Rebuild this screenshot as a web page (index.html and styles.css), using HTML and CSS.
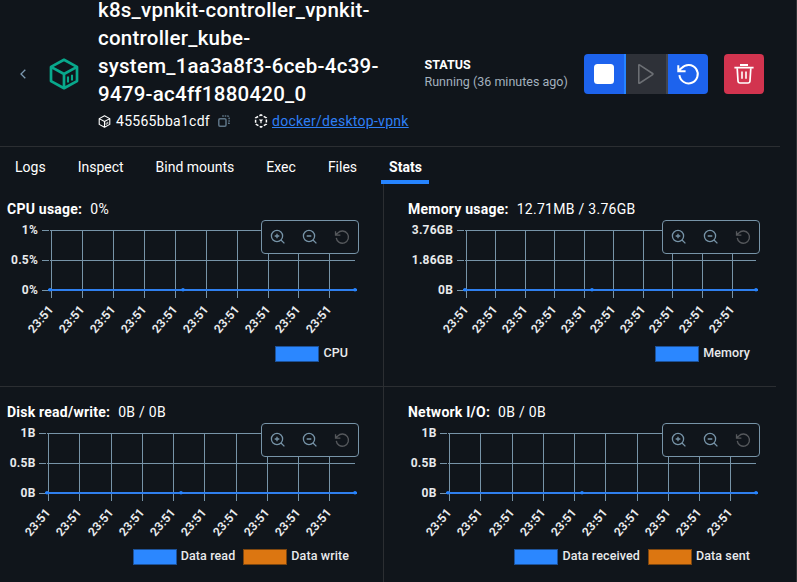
FILE: index.html
```html
<!DOCTYPE html>
<html lang="en">
<head>
<meta charset="utf-8">
<title>Container stats</title>
<link rel="stylesheet" href="styles.css">
</head>
<body>
<svg class="defs" aria-hidden="true">
  <symbol id="cube" viewBox="0 0 30 32">
    <path d="M15 1.8 28 8.9V23.1L15 30.2 2 23.1V8.9Z M2 8.9 15 16 28 8.9 M15 16V30" fill="none" stroke="currentColor" stroke-width="2.7" stroke-linejoin="round"/>
    <path d="M19 18.6V24.4 M23 16.8V22.6" fill="none" stroke="currentColor" stroke-width="2.1"/>
  </symbol>
  <symbol id="zoom-in" viewBox="0 0 16 16">
    <g fill="none" stroke="currentColor" stroke-width="1.3"><circle cx="7" cy="7" r="5.6"/><path d="M11 11 14.4 14.4 M7 4.7V9.3 M4.7 7H9.3"/></g>
  </symbol>
  <symbol id="zoom-out" viewBox="0 0 16 16">
    <g fill="none" stroke="currentColor" stroke-width="1.3"><circle cx="7" cy="7" r="5.6"/><path d="M11 11 14.4 14.4 M4.7 7H9.3"/></g>
  </symbol>
  <symbol id="restart" viewBox="0 0 24 24">
    <path d="M3.4 13.2A9.2 9.2 0 1 0 5.6 6.1L2.8 8.6 M2.3 3.2V9.2H9.6" fill="none" stroke="currentColor" stroke-width="2"/>
  </symbol>
</svg>

<div class="page">
  <header class="header">
    <svg class="back" viewBox="0 0 6 10"><path d="M5.3.7 1 5 5.3 9.3" fill="none" stroke="currentColor" stroke-width="1.3"/></svg>
    <svg class="logo"><use href="#cube"/></svg>
    <div class="identity">
      <h1>k8s_vpnkit-controller_vpnkit-<br>controller_kube-<br>system_1aa3a8f3-6ceb-4c39-<br>9479-ac4ff1880420_0</h1>
      <div class="meta">
        <svg class="meta-icon"><use href="#cube"/></svg>
        <span class="hash">45565bba1cdf</span>
        <svg class="copy" viewBox="0 0 12 12"><g fill="none" stroke="currentColor" stroke-width="1.5"><rect x=".8" y="3.8" width="7.2" height="7.4" rx="1.2"/><path d="M4.2 1H9.2Q11.1 1 11.1 3V8.2H9.4" stroke-dasharray="1.6 .9"/></g></svg>
        <svg class="image-icon" viewBox="0 0 14 14"><path d="M7 .9 12.4 3.9V10.1L7 13.1 1.6 10.1V3.9Z" fill="none" stroke="currentColor" stroke-width="1.5" stroke-dasharray="3.1 1.5" stroke-dashoffset="1.5"/><path d="M4.8 5.6H9.2L7.6 7.2V9.2H6.4V7.2Z" fill="currentColor"/></svg>
        <a class="image-link" href="#">docker/desktop-vpnk</a>
      </div>
    </div>
    <div class="status">
      <div class="status-title">STATUS</div>
      <div class="status-text">Running (36 minutes ago)</div>
    </div>
    <div class="actions">
      <button class="btn stop" aria-label="Stop"><svg viewBox="0 0 20 20"><rect width="20" height="20" rx="3.5" fill="currentColor"/></svg></button>
      <button class="btn start" aria-label="Start"><svg viewBox="0 0 20 20"><path d="M2.8 1.2V18.8Q2.8 19.6 3.5 19.2L16.6 10.6Q17.3 10 16.6 9.5L3.5.9Q2.8.5 2.8 1.2Z" fill="none" stroke="currentColor" stroke-width="1.6"/></svg></button>
      <button class="btn again" aria-label="Restart"><svg><use href="#restart"/></svg></button>
    </div>
    <button class="btn delete" aria-label="Delete"><svg viewBox="0 0 20 20"><g fill="none" stroke="currentColor"><path d="M6 1H14 M.4 3.7H19.6" stroke-width="1.8"/><path d="M3.2 4.2 4 17Q4.2 19 6 19H14Q15.8 19 16 17L16.8 4.2" stroke-width="1.7"/><path d="M8 7.4V14.8 M12 7.4V14.8" stroke-width="1.6"/></g></svg></button>
  </header>

  <nav class="tabs">
    <a>Logs</a><a>Inspect</a><a>Bind mounts</a><a>Exec</a><a>Files</a><a class="active">Stats</a>
  </nav>

  <main class="grid" id="grid"></main>
</div>
<script src="charts.js"></script>
</body>
</html>
```
FILE: charts.js
```js
// Coordinates are relative to the top-left corner of each chart.
const charts = [
  { title: 'CPU usage:', value: '0%', y: ['1%', '0.5%', '0%'], labelX: 38,
    left: 42, x: [51, 82, 113, 144, 175, 206, 237, 268, 298, 329], mid: 183,
    legend: [['CPU', 'read']] },
  { title: 'Memory usage:', value: '12.71MB / 3.76GB', y: ['3.76GB', '1.86GB', '0B'], labelX: 69,
    left: 73, x: [82, 111, 141, 170, 200, 229, 259, 288, 318, 348], mid: 208,
    legend: [['Memory', 'read']] },
  { title: 'Disk read/write:', value: '0B / 0B', y: ['1B', '0.5B', '0B'], labelX: 35.5,
    left: 39, x: [48, 79, 111, 142, 173, 204, 236, 267, 298, 329], mid: 181,
    legend: [['Data read', 'read'], ['Data write', 'write']] },
  { title: 'Network I/O:', value: '0B / 0B', y: ['1B', '0.5B', '0B'], labelX: 52.5,
    left: 56, x: [65, 96, 128, 159, 190, 221, 253, 284, 315, 346], mid: 198,
    legend: [['Data received', 'read'], ['Data sent', 'write']] }
];

function plot(c, end) {
  const x0 = c.left + 8;
  let s = '';
  c.y.forEach((label, i) => {
    const y = 10.5 + i * 30;
    s += `<path class="line" d="M${c.left} ${y}H${x0 - 1}M${x0} ${y}H${end}"/>`;
    s += `<text class="tick" x="${c.labelX}" y="${y + 3.5}" text-anchor="end">${label}</text>`;
  });
  c.x.forEach(x => {
    s += `<path class="line" d="M${x + .5} 10V78"/>`;
    s += `<text class="tick" text-anchor="end" transform="translate(${x} 87) rotate(-50)" y="4">23:51</text>`;
  });
  s += `<path class="series" d="M${x0 - 2} 70H${end + 2}"/>`;
  [x0, c.mid, end].forEach(x => { s += `<circle class="point" cx="${x}" cy="69.8" r="1.8"/>`; });
  return s;
}

document.getElementById('grid').innerHTML = charts.map((c, i) => {
  const end = i % 2 ? 372 : 355;
  const legend = c.legend.map(([name, cls]) =>
    `<span class="key"><i class="swatch ${cls}"></i>${name}</span>`).join('');
  return `<section class="panel">
    <h2>${c.title}<span>${c.value}</span></h2>
    <div class="chart">
      <svg class="plot">${plot(c, end)}</svg>
      <div class="tools">
        <svg><use href="#zoom-in"/></svg><svg><use href="#zoom-out"/></svg><svg class="off"><use href="#restart"/></svg>
      </div>
    </div>
    <div class="legend">${legend}</div>
  </section>`;
}).join('');
```
FILE: styles.css
```css
* { box-sizing: border-box; }
body { margin: 0; background: #10151b; color: #fff; font-family: Roboto, "Liberation Sans", sans-serif; font-size: 14px; }
.defs { position: absolute; width: 0; height: 0; }
svg { display: block; flex: none; }
.page { width: 797px; height: 582px; overflow: hidden; border-right: 1px solid #2f3135; }

.header { display: flex; align-items: center; width: 780px; height: 147px; padding: 2px 0 0 20px; border-bottom: 1px solid #2b2e32; }
.back { width: 6px; height: 10px; color: #7c99b0; }
.logo { width: 30px; height: 32px; margin-left: 23px; color: #08a88c; }
.identity { align-self: flex-start; width: 326.5px; margin: -6px 0 0 19px; }
h1 { margin: 0; font-size: 20.5px; line-height: 28px; font-weight: 500; letter-spacing: .24px; white-space: nowrap; }
.meta { display: flex; align-items: center; height: 26px; letter-spacing: .28px; white-space: nowrap; }
.meta-icon { width: 13px; height: 13px; margin-right: 5px; }
.hash { width: 102px; }
.copy { width: 12px; height: 12px; color: #5d7486; }
.image-icon { width: 14px; height: 14px; margin: 0 4px 0 24px; }
.image-link { color: #2e7ff5; }
.status { width: 159.5px; margin-top: -2px; line-height: 17px; font-size: 12.5px; white-space: nowrap; }
.status-title { font-weight: 700; }
.status-text { color: #a3b1be; }

.actions { display: flex; border-radius: 4px; overflow: hidden; }
.btn { display: flex; align-items: center; justify-content: center; width: 40px; height: 40px; margin: 0; padding: 0; border: 0; background: #1d63ed; color: #fff; }
.btn svg { width: 20px; height: 20px; }
.btn.stop { width: 42px; border-right: 2px solid #2684ff; }
.btn.start { width: 42px; background: #2e3138; color: #6c6f74; border-right: 2px solid #43464d; }
.btn.again svg { width: 24px; height: 24px; }
.btn.delete { margin-left: 16px; border-radius: 4px; background: #d2344f; }

.tabs { display: flex; height: 37px; padding-left: 7px; }
.tabs a { height: 37px; padding: 0 8px; margin-right: 16px; line-height: 41px; border-bottom: 4px solid transparent; white-space: nowrap; }
.tabs .active { padding-right: 7px; font-weight: 700; border-color: #2684ff; }

.grid { display: grid; grid-template-columns: 384px 392px; grid-template-rows: 203px 203px; }
.panel { padding: 16px 0 0; border-bottom: 1px solid #2b2e32; }
.panel:nth-child(odd) { border-right: 1px solid #2b2e32; }
h2 { margin: 0 0 2px 7px; height: 18px; line-height: 18px; font-size: 14px; font-weight: 700; letter-spacing: .23px; white-space: nowrap; }
.panel:nth-child(even) h2 { margin-left: 24px; }
h2 span { margin-left: 8px; font-weight: 400; letter-spacing: .28px; }
.chart { position: relative; height: 124px; }
.plot { width: 383px; height: 124px; overflow: visible; }
.line { fill: none; stroke: #7794a8; stroke-width: 1; }
.series { stroke: #2f7fee; stroke-width: 2; }
.point { fill: #2684ff; }
.tick { fill: #e8eaec; font-size: 12px; font-weight: 700; letter-spacing: .2px; }
.tools { position: absolute; top: 0; left: 261px; display: flex; align-items: center; gap: 16px; width: 98px; height: 34px; padding-left: 8px; border: 1px solid #7794a8; border-radius: 4px; background: #10151b; color: #7794a8; }
.panel:nth-child(even) .tools { left: 278px; }
.tools svg { width: 16px; height: 16px; }
.tools .off { color: #55585c; }
.legend { display: flex; justify-content: flex-end; gap: 8px; height: 20px; padding-right: 34px; color: #e8eaec; font-size: 12.5px; font-weight: 500; letter-spacing: .1px; line-height: 18px; }
.panel:nth-child(even) .legend { padding-right: 26px; }
.panel:first-child .legend { padding-right: 35px; }
.key { display: flex; gap: 4px; }
.swatch { width: 44px; height: 16px; margin-top: 2px; border: 1px solid #1d5299; background: #2b87ff; }
.swatch.write { border-color: #7d460f; background: #dc7611; }
```
